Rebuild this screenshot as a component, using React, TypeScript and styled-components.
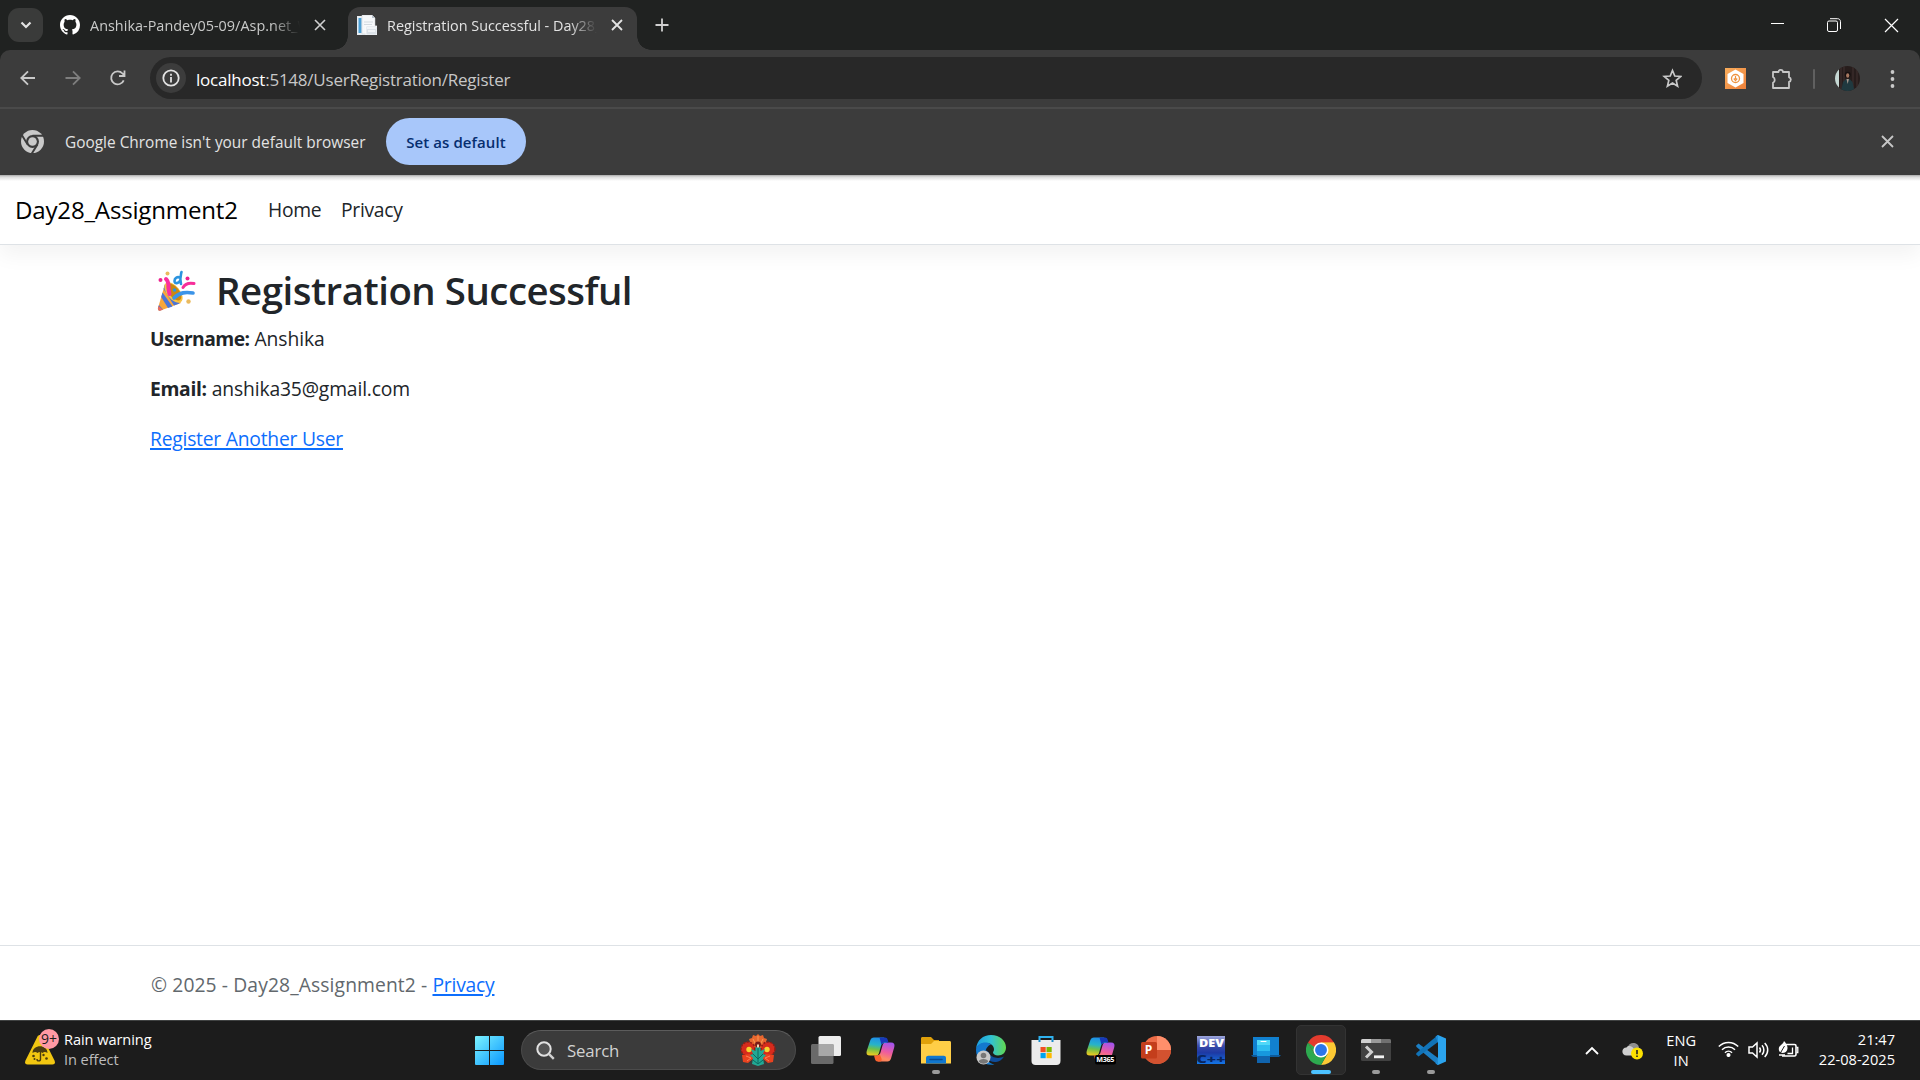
import React from "react";
import styled, { createGlobalStyle } from "styled-components";

const GlobalStyle = createGlobalStyle`
  *, *::before, *::after { box-sizing: border-box; }
  html, body { margin: 0; padding: 0; background: #fff; overflow: hidden; }
  svg { display: block; flex: none; }
`;

const Screen = styled.div`
  width: 1920px;
  height: 1080px;
  display: flex;
  flex-direction: column;
  overflow: hidden;
  background: #fff;
  font-family: "Open Sans", "Noto Sans", "Liberation Sans", sans-serif;
`;

/* Browser chrome */
const TabStrip = styled.div`
  height: 50px;
  flex: none;
  display: flex;
  background: #202221;
  padding: 0 0 0 8px;
`;
const TabSearch = styled.div`
  width: 35px;
  height: 34px;
  margin-top: 8px;
  border-radius: 11px;
  background: #3a3b3a;
  display: flex;
  align-items: center;
  justify-content: center;
`;
const Tab = styled.div<{ $active?: boolean; $width: number }>`
  position: relative;
  width: ${(p) => p.$width}px;
  height: ${(p) => (p.$active ? 43 : 50)}px;
  margin-top: ${(p) => (p.$active ? 7 : 0)}px;
  display: flex;
  align-items: center;
  padding: ${(p) => (p.$active ? "0 13px 7px 9px" : "0 0 0 17px")};
  border-radius: 12px 12px 0 0;
  background: ${(p) => (p.$active ? "#3c3c3c" : "transparent")};
`;
const TabFoot = styled.i<{ $side: "left" | "right" }>`
  position: absolute;
  bottom: 0;
  ${(p) => p.$side}: -14px;
  width: 14px;
  height: 14px;
  background: radial-gradient(circle at ${(p) => (p.$side === "left" ? "0 0" : "100% 0")}, transparent 13.5px, #3c3c3c 14px);
`;
const TabTitle = styled.span<{ $active?: boolean; $spacing: number }>`
  width: 210px;
  margin-left: 10px;
  padding-top: 2px;
  overflow: hidden;
  white-space: nowrap;
  font-size: 14.4px;
  line-height: 20px;
  letter-spacing: ${(p) => p.$spacing}px;
  color: ${(p) => (p.$active ? "#e3e3e3" : "#c9cac9")};
  mask-image: linear-gradient(90deg, #000 182px, transparent 210px);
`;
const TabClose = styled.span`
  margin-left: 14px;
  display: flex;
`;
const NewTab = styled.span`
  display: flex;
  align-items: center;
  margin-left: 18px;
`;
const WindowButtons = styled.div`
  display: flex;
  align-items: center;
  margin-left: auto;
  padding-right: 21px;
  gap: 43px;
`;

const ToolbarBack = styled.div`
  flex: none;
  background: #202221;
`;
const Toolbar = styled.div`
  height: 59px;
  display: flex;
  align-items: center;
  padding: 0 25px 2px 18px;
  background: #3c3c3c;
  border-bottom: 2px solid #4a4a4a;
  border-radius: 10px 10px 0 0;
`;
const NavButtons = styled.div`
  display: flex;
  align-items: center;
  gap: 25px;
  width: 132px;
`;
const AddressBar = styled.div`
  width: 1552px;
  height: 42px;
  margin-top: 1px;
  border-radius: 21px;
  background: #282828;
  display: flex;
  align-items: center;
  padding: 0 20px 0 6px;
`;
const SiteInfo = styled.span`
  width: 30px;
  height: 30px;
  border-radius: 50%;
  background: #3c3c3c;
  display: flex;
  align-items: center;
  justify-content: center;
`;
const Url = styled.span`
  margin: 0 auto 0 10px;
  padding-top: 3px;
  font-size: 17px;
  line-height: 24px;
  letter-spacing: -0.23px;
  color: #c7c7c7;
  b { font-weight: 400; color: #fff; }
`;
const Extensions = styled.div`
  display: flex;
  align-items: center;
  flex: 1;
  justify-content: flex-end;
  padding-top: 2px;
`;
const Orange = styled.span`
  width: 21px;
  height: 21px;
  margin-right: 25px;
  background: linear-gradient(135deg, #f9ad5c, #ee8039);
  display: flex;
`;
const Divider = styled.i`
  width: 2px;
  height: 20px;
  border-radius: 1px;
  background: #606060;
  margin: 0 20px 0 20px;
`;
const Avatar = styled.span`
  width: 25px;
  height: 25px;
  border-radius: 50%;
  overflow: hidden;
  margin-right: 30px;
`;

const InfoBar = styled.div`
  height: 66px;
  flex: none;
  display: flex;
  align-items: center;
  background: #3c3c3c;
  padding: 0 26px 1px 21px;
`;
const InfoText = styled.span`
  margin-left: 21px;
  padding-top: 2px;
  width: 321px;
  font-size: 15.4px;
  line-height: 22px;
  color: #e3e3e3;
  letter-spacing: 0.01px;
  white-space: nowrap;
`;
const DefaultButton = styled.button`
  width: 140px;
  height: 47px;
  border: 0;
  border-radius: 24px;
  background: #a8c7fa;
  color: #062e6f;
  font: 600 15px/22px "Open Sans", sans-serif;
  letter-spacing: 0.08px;
  padding: 1px 0 0;
  margin-right: auto;
  white-space: nowrap;
`;

/* Web page */
const Page = styled.div`
  flex: 1;
  display: flex;
  flex-direction: column;
  background: #fff;
  color: #212529;
  font-size: 19.3px;
  line-height: 30px;
`;
const NavBar = styled.header`
  height: 70px;
  display: flex;
  align-items: center;
  padding: 1px 0 0 15px;
  border-bottom: 1px solid #dee2e6;
  background: linear-gradient(#a8a8a8, #dcdcdc 2px, #fff 6px);
  box-shadow: 0 10px 20px rgba(0, 0, 0, 0.05);
`;
const Brand = styled.a`
  width: 253px;
  font-size: 24.1px;
  letter-spacing: -0.2px;
  color: #000;
  white-space: nowrap;
`;
const NavLink = styled.a<{ $width: number }>`
  width: ${(p) => p.$width}px;
  color: #212529;
  letter-spacing: -0.3px;
  white-space: nowrap;
`;
const Main = styled.main`
  flex: 1;
  padding: 21px 150px 0;
`;
const Heading = styled.h2`
  display: flex;
  align-items: center;
  height: 48px;
  margin: 0 0 10px;
  font-size: 38.4px;
  line-height: 48px;
  font-weight: 600;
  white-space: nowrap;
  svg { margin: 2px 19px 0 7px; }
`;
const Title = styled.span`
  letter-spacing: -0.48px;
`;
const Field = styled.p`
  margin: 0 0 20px;
`;
const Label = styled.strong<{ $spacing: number }>`
  font-weight: 700;
  letter-spacing: ${(p) => p.$spacing}px;
`;
const Value = styled.span<{ $spacing: number }>`
  letter-spacing: ${(p) => p.$spacing}px;
`;
const Link = styled.a`
  color: #0d6efd;
  letter-spacing: -0.23px;
  text-decoration: underline;
  text-decoration-thickness: 2px;
  text-underline-offset: 2px;
`;
const Footer = styled.footer`
  height: 75px;
  border-top: 1px solid #dee2e6;
  padding: 24px 151px 0;
  color: #62686d;
  white-space: nowrap;
`;

/* Taskbar */
const TaskBar = styled.div`
  height: 60px;
  flex: none;
  display: flex;
  align-items: center;
  background: #1c1c1c;
  border-top: 1px solid #404242;
  color: #fff;
  font-size: 14.6px;
  line-height: 20px;
`;
const Weather = styled.div`
  display: flex;
  align-items: center;
  width: 475px;
  padding: 0 0 3px 25px;
`;
const WeatherIcon = styled.div`
  width: 39px;
  height: 40px;
`;
const Lines = styled.div<{ $align: string; $spacing?: number }>`
  display: flex;
  flex-direction: column;
  align-items: ${(p) => p.$align};
  letter-spacing: ${(p) => p.$spacing ?? 0}px;
  padding-bottom: 1px;
  white-space: nowrap;
`;
const Muted = styled.span`
  color: #bdbdbd;
`;
const SearchBox = styled.div`
  width: 275px;
  height: 40px;
  margin: 0 2px 1px 17px;
  border: 1px solid #4b4b4b;
  border-top-color: #5c5c5c;
  border-radius: 20px;
  background: #3b3b3b;
  display: flex;
  align-items: center;
  padding: 0 19px 0 14px;
`;
const SearchText = styled.span`
  margin: 1px auto 0 12px;
  font-size: 16.8px;
  line-height: 22px;
  letter-spacing: -0.15px;
  color: #d2d2d2;
`;
const AppCell = styled.div<{ $active?: boolean }>`
  width: 50px;
  height: 50px;
  margin: 0 2.5px 1px;
  border-radius: 5px;
  border: 1px solid ${(p) => (p.$active ? "#333" : "transparent")};
  background: ${(p) => (p.$active ? "#292929" : "transparent")};
  display: grid;
  grid-template-rows: 1fr 4px;
  justify-items: center;
  padding-top: 9px;
`;
const Indicator = styled.i<{ $kind?: "open" | "active" }>`
  height: 4px;
  border-radius: 2px;
  width: ${(p) => (p.$kind === "active" ? 20 : 8)}px;
  background: ${(p) => (p.$kind === "active" ? "#4cc2ff" : p.$kind === "open" ? "#9a9a9a" : "transparent")};
`;
const Tray = styled.div`
  margin-left: auto;
  padding: 0 24px 1px 0;
  display: flex;
  align-items: center;
`;
const TrayIcons = styled.div`
  display: flex;
  gap: 9px;
  margin: 0 0 0 22px;
`;
const OneDrive = styled.div`
  margin: 2px 22px 0 23px;
`;
const Clock = styled.div`
  width: 97px;
  padding: 0 1px 2px 0;
`;

const Cross = ({ size, color, w = 2 }: { size: number; color: string; w?: number }) => (
  <svg width={size} height={size} viewBox={`0 0 ${size} ${size}`}>
    <path d={`M1 1L${size - 1} ${size - 1}M${size - 1} 1L1 ${size - 1}`} stroke={color} strokeWidth={w} />
  </svg>
);

const GitHub = () => (
  <svg width="20" height="20" viewBox="0 0 16 16" fill="#fff">
    <path d="M8 0C3.58 0 0 3.58 0 8c0 3.54 2.29 6.53 5.47 7.59.4.07.55-.17.55-.38 0-.19-.01-.82-.01-1.49-2.01.37-2.53-.49-2.69-.94-.09-.23-.48-.94-.82-1.13-.28-.15-.68-.52-.01-.53.63-.01 1.08.58 1.23.82.72 1.21 1.87.87 2.33.66.07-.52.28-.87.51-1.07-1.78-.2-3.64-.89-3.64-3.95 0-.87.31-1.59.82-2.15-.08-.2-.36-1.02.08-2.12 0 0 .67-.21 2.2.82.64-.18 1.32-.27 2-.27s1.36.09 2 .27c1.53-1.04 2.2-.82 2.2-.82.44 1.1.16 1.92.08 2.12.51.56.82 1.27.82 2.15 0 3.07-1.87 3.75-3.65 3.95.29.25.54.73.54 1.48 0 1.07-.01 1.93-.01 2.2 0 .21.15.46.55.38A8.01 8.01 0 0016 8c0-4.42-3.58-8-8-8z" />
  </svg>
);

const Favicon = () => (
  <svg width="20" height="20" viewBox="0 0 20 20">
    <path d="M0 1h12v19H0z" fill="#e8eef3" />
    <path d="M1.500 3h3v15h-3z" fill="#4b9fd5" />
    <path d="M5 0h10l3 3v16H5z" fill="#f6f8fa" stroke="#c8ccd0" strokeWidth=".5" />
    <path d="M15 0v3h3z" fill="#b9c3cc" />
    <path d="M7 7h9M7 9.500h8" stroke="#d3dae0" />
    <path d="M9 11h11v9H9z" fill="#dce2e8" stroke="#fff" strokeWidth=".7" />
    <path d="M10 13h9M11 16h7" stroke="#f8fafb" strokeWidth="1.300" />
  </svg>
);

const Chrome = ({ size, mono }: { size: number; mono?: boolean }) =>
  mono ? (
    <svg width={size} height={size} viewBox="0 0 48 48">
      <circle cx="24" cy="24" r="24" fill="#c9c9c9" />
      <path d="M24 12H46M34.400 30L22 50M13.600 30L2 11" stroke="#3c3c3c" strokeWidth="4" />
      <circle cx="24" cy="24" r="13.500" fill="#3c3c3c" />
      <circle cx="24" cy="24" r="9" fill="#c9c9c9" />
    </svg>
  ) : (
    <svg width={size} height={size} viewBox="0 0 48 48">
      <path d="M24 24L3.200 12A24 24 0 0 1 44.800 12z" fill="#e33b2e" />
      <path d="M44.800 12A24 24 0 0 1 24 48L34.400 30 24 12z" fill="#fcc934" />
      <path d="M3.200 12A24 24 0 0 0 24 48L34.400 30 24 28 13.600 30z" fill="#2da94f" />
      <path d="M3.200 12H44.800L24 24 13.600 30z" fill="#e33b2e" />
      <path d="M3.200 12L13.600 30 20 24z" fill="#2da94f" />
      <path d="M24 12H44.800L34.400 30z" fill="#fcc934" />
      <circle cx="24" cy="24" r="12" fill="#fff" />
      <circle cx="24" cy="24" r="9.500" fill="#2b76ea" />
    </svg>
  );

const Party = () => (
  <svg width="40" height="42" viewBox="0 0 40 42">
    <path d="M8 14L1 38c-.5 2 .8 3 2.500 2.500L24 33z" fill="#f9a63a" />
    <path d="M6.500 19L17 35.500l5.500-2L7.800 14.500zM4.200 27l6.800 11 4.500-1.600L5.500 22.500zM2 35l4 4.500-3 1c-1.500.2-2.300-.8-2-2.500z" fill="#4a75d8" />
    <path d="M1.600 36L6 39.700l-2.500.9c-1.800.3-2.800-.6-2.500-2.300z" fill="#ed6b5c" />
    <ellipse cx="16.500" cy="22.500" rx="6.500" ry="12" transform="rotate(-39 16.500 22.500)" fill="#f7c243" />
    <ellipse cx="17" cy="22" rx="5" ry="10" transform="rotate(-39 17 22)" fill="#c98712" />
    <path d="M9 9c4.500 4 1 9 3.500 15" fill="none" stroke="#fa2e9e" strokeWidth="4" strokeLinecap="round" />
    <path d="M17 28c6-6 12-6 19-5" fill="none" stroke="#3b94e8" strokeWidth="3.600" strokeLinecap="round" />
    <path d="M26 17.500c2-3.500 6-5 11-4" fill="none" stroke="#f72e9a" strokeWidth="3" strokeLinecap="round" />
    <path d="M24.500 2c-1 4-2 6-.5 12M23.500 8c-3-2-6 0-6 3s4 3 6-1" fill="none" stroke="#2c94df" strokeWidth="2.600" strokeLinecap="round" />
    <g fill="#ed218f"><circle cx="3.500" cy="10" r="2" /><circle cx="30.500" cy="8.500" r="2" /></g>
    <g fill="#eaba5e"><circle cx="10.500" cy="3.500" r="2" /><circle cx="31.500" cy="31.500" r="2.200" /></g>
    <circle cx="17.500" cy="20" r="1.800" fill="#2c94df" />
  </svg>
);

const Peacock = () => (
  <svg width="36" height="32" viewBox="0 0 36 32">
    <path d="M18 0l2 2 3-1 1 3 3 1-1 3 1 3-4 3H13L9 11l1-3-1-3 3-1 1-3 3 1z" fill="#e8672f" />
    <path d="M18 2v10M13 5l4 8M23 5l-4 8" stroke="#f79a55" />
    <circle cx="8" cy="15" r="7" fill="#d62b1c" stroke="#8e1d16" strokeWidth="1.500" strokeDasharray="2 1.500" />
    <circle cx="28" cy="15" r="7" fill="#d62b1c" stroke="#8e1d16" strokeWidth="1.500" strokeDasharray="2 1.500" />
    <path d="M2 21l8-1 4 4-6 5-5-1zM34 21l-8-1-4 4 6 5 5-1z" fill="#e9421f" />
    <path d="M6 22l5 2-4 3M30 22l-5 2 4 3" stroke="#ff8055" fill="none" />
    <circle cx="9" cy="15.500" r="2.700" fill="#f8d32f" />
    <circle cx="27" cy="15.500" r="2.700" fill="#f8d32f" />
    <path d="M18 12c2 0 3 2 2.500 5l4.500-2-2 5 3 1-3 3 1 6-6 2-6-2 1-6-3-3 3-1-2-5 4.500 2c-.5-3 .5-5 2.500-5z" fill="#22a995" />
    <path d="M18 14v15M13 20l5 5 5-5M13 26l5 4 5-4" stroke="#0c685f" fill="none" />
    <circle cx="18" cy="10.500" r="3" fill="#7b1b17" />
    <path d="M17 10.500h2v3h-2z" fill="#f5d8b7" />
  </svg>
);

const CopilotShape = () => (
  <>
    <path d="M21.500 26.500H12L8.500 20.500h2.500c2 0 3-1 3.500-3l2-7C17 8.500 18 7.500 20 7.500h5c3 0 4 1.500 3.300 4.500L25 23.500c-.7 2-1.700 3-3.500 3z" fill="url(#cpB)" />
    <path d="M8 2.500h10l3 5.500h-2.500c-2 0-3 1-3.500 3l-2 7c-.5 1.700-1.500 2.500-3.200 2.500H4C1 20.500 0 19 .7 16L4.200 5.500C4.900 3.500 6 2.500 8 2.500z" fill="url(#cpA)" />
    <path d="M13.500 2.500H19c1.500 0 2.300.8 2.700 2.200l.8 2.800H20c-2.500 0-3.800.5-4.500 2.500z" fill="#1838b8" />
    <path d="M8 20.500h3c1 0 2-.5 2.700-1.500l1.800 4.500c.4 1.500 0 3-1.500 3h-2.500c-1.200 0-2-.8-2.400-2z" fill="#f9622f" />
  </>
);
const Copilot = ({ m365 }: { m365?: boolean }) => (
  <svg width="30" height="30" viewBox="0 0 30 30">
    <defs>
      <linearGradient id="cpA" x1=".5" y1="0" x2=".35" y2="1">
        <stop offset="0" stopColor="#1e8ee8" /><stop offset=".4" stopColor="#27b3c9" /><stop offset=".65" stopColor="#6dc04a" /><stop offset="1" stopColor="#f0cb1f" />
      </linearGradient>
      <linearGradient id="cpB" x1=".7" y1="0" x2=".4" y2="1">
        <stop offset="0" stopColor="#a254ee" /><stop offset=".5" stopColor="#ee5c9f" /><stop offset=".85" stopColor="#fd8c62" /><stop offset="1" stopColor="#fb7a55" />
      </linearGradient>
    </defs>
    <CopilotShape />
    {m365 && (
      <>
        <rect x="9" y="20" width="21" height="9.500" rx="2" fill="#000" />
        <text x="10.300" y="27.300" fontSize="7.200" fontWeight="700" fill="#fff" fontFamily="Open Sans" textLength="18">M365</text>
      </>
    )}
  </svg>
);

const TaskView = () => (
  <svg width="30" height="30" viewBox="0 0 30 30">
    <rect x="7.500" y="1" width="22.500" height="20" rx="1.500" fill="#ededed" />
    <rect x="0" y="9" width="22.500" height="20" rx="1.500" fill="#6a6a6a" />
    <path d="M7.500 9h15v12h-15z" fill="#a8a8a8" />
  </svg>
);
const Folder = () => (
  <svg width="30" height="30" viewBox="0 0 30 30">
    <path d="M0 3.500C0 2.500.7 2 1.500 2H10l3 3h5v8H0z" fill="#e0a10b" />
    <path d="M0 9h10l3-3h15.500c1 0 1.500.6 1.500 1.500v21H0z" fill="#ffce47" />
    <path d="M5 28.500V23c0-1.500 1-2.300 2.300-2.300h15.400c1.300 0 2.300.8 2.300 2.300v5.500z" fill="#1077cf" />
    <path d="M9 24.500h12" stroke="#084b91" strokeWidth="1.500" strokeLinecap="round" />
  </svg>
);
const Edge = () => (
  <svg width="30" height="30" viewBox="0 0 30 30">
    <defs><linearGradient id="edgeTop"><stop offset="0" stopColor="#1b9de2" /><stop offset=".5" stopColor="#31c2d4" /><stop offset="1" stopColor="#62d84e" /></linearGradient></defs>
    <path d="M0 14C1 5 7 0 15 0c9 0 15 6 15 12.500 0 5-3.500 8-8 8-3 0-5-1.500-5-3 0-1 1-1.200 1-3.300C18 11 15 8 10.500 8 5 8 1 11 0 14z" fill="url(#edgeTop)" />
    <path d="M0 15c0-5 5-7.500 9.500-7.500 2 0 4 .5 5.500 2-3 1-5.500 4-5.500 8.500 0 6 4 11 9 11.500C9 31.500 0 25 0 15z" fill="#1379cf" />
    <path d="M10.500 15c-2 7 3.500 13 9.500 12 3 0 6-2.500 8-5.500-6 3-13 1-15-3.500z" fill="#0f4d9b" />
    <circle cx="7.500" cy="22.500" r="7" fill="#c9c9c9" />
    <circle cx="7.500" cy="20.500" r="2.800" fill="#777" />
    <path d="M2.800 26.500c0-3.500 9.400-3.500 9.400 0-2.500 3-7 3-9.400 0z" fill="#777" />
  </svg>
);
const Store = () => (
  <svg width="30" height="30" viewBox="0 0 30 30">
    <path d="M8.500 7V2h13v5" fill="none" stroke="#2fb2ef" strokeWidth="2" />
    <path d="M.5 5h29v21c0 2.500-1.500 4-4 4h-21c-2.500 0-4-1.500-4-4z" fill="#ececec" />
    <path d="M8.500 7V5M21.500 7V5" stroke="#178bcb" strokeWidth="2" />
    <path d="M9.500 12h5.200v5.200H9.500z" fill="#f25022" /><path d="M15.500 12h5.200v5.200h-5.200z" fill="#7fba00" />
    <path d="M9.500 18h5.200v5.200H9.500z" fill="#00a4ef" /><path d="M15.500 18h5.200v5.200h-5.200z" fill="#ffb900" />
  </svg>
);
const PowerPoint = () => (
  <svg width="30" height="30" viewBox="0 0 30 30">
    <circle cx="16" cy="15" r="14" fill="#ed6c47" />
    <path d="M16 1a14 14 0 0 1 14 14H16z" fill="#ff8f6b" />
    <path d="M30 15a14 14 0 0 1-28 0z" fill="#d35230" />
    <rect x="0" y="7" width="16" height="16.500" rx="1.500" fill="#c43e1c" />
    <text x="3.800" y="19" fontSize="12" fontWeight="700" fill="#fff" fontFamily="Open Sans">P</text>
  </svg>
);
const DevCpp = () => (
  <svg width="30" height="30" viewBox="0 0 30 30">
    <defs><linearGradient id="devBg" x2="0" y2="1"><stop offset="0" stopColor="#9da6dc" /><stop offset=".35" stopColor="#3b4ba8" /><stop offset=".6" stopColor="#1d39a4" /><stop offset="1" stopColor="#1476e6" /></linearGradient></defs>
    <path d="M1 1h28v28H1z" fill="url(#devBg)" />
    <text x="3" y="12.300" fontSize="11" fontWeight="800" fill="#fff" fontFamily="Open Sans" textLength="25" lengthAdjust="spacingAndGlyphs">DEV</text>
    <text x="0.500" y="27.600" fontSize="11" fontWeight="800" fill="#08245e" fontFamily="Open Sans" textLength="29" lengthAdjust="spacingAndGlyphs">C++</text>
  </svg>
);
const PhoneLink = () => (
  <svg width="30" height="30" viewBox="0 0 30 30">
    <path d="M2 2h26v18H2z" fill="#1180cf" /><path d="M0 20h30l-2 2H2z" fill="#0d5a9b" />
    <path d="M6 5h13v10H6z" fill="#50d9f8" /><path d="M6 10h13v6H6z" fill="#2dbdf0" /><path d="M6 16h13v5H6z" fill="#1798de" /><path d="M6 21h13v7H6z" fill="#1064ae" />
    <path d="M10 6.500h5" stroke="#fff" strokeLinecap="round" />
  </svg>
);
const Terminal = () => (
  <svg width="30" height="30" viewBox="0 0 30 30">
    <rect x="0" y="4" width="30" height="22" rx="1.500" fill="#414141" />
    <path d="M0 8V5.500Q0 4 1.500 4H10v4z" fill="#d0d0d0" /><path d="M10 4h10v4H10z" fill="#9a9a9a" /><path d="M20 4h8.500Q30 4 30 5.500V8H20z" fill="#707070" />
    <path d="M5 11.500l5.500 5.500L5 22.500" fill="none" stroke="#cfcfcf" strokeWidth="3" /><path d="M13 21.800h10" stroke="#f2f2f2" strokeWidth="2.800" />
  </svg>
);
const VsCode = () => (
  <svg width="30" height="30" viewBox="0 0 30 30">
    <path d="M0 10.800l2.500-2.300L22 23v7L.5 12z" fill="#1c7fc4" />
    <path d="M0 19.200l2.500 2.300L22 7V0L.5 18z" fill="#1173b7" />
    <path d="M22 0l8 3.500v23L22 30l-1.500-1 1.500-6V7l-1.500-6z" fill="#2ba4ee" />
    <path d="M22 0l-2.500 1.500L22 8zM22 30l-2.500-1.500L22 22z" fill="#1e8ad4" />
  </svg>
);

const apps: { icon: React.ReactNode; kind?: "open" | "active" }[] = [
  { icon: <TaskView /> },
  { icon: <Copilot /> },
  { icon: <Folder />, kind: "open" },
  { icon: <Edge /> },
  { icon: <Store /> },
  { icon: <Copilot m365 /> },
  { icon: <PowerPoint /> },
  { icon: <DevCpp /> },
  { icon: <PhoneLink /> },
  { icon: <Chrome size={30} />, kind: "active" },
  { icon: <Terminal />, kind: "open" },
  { icon: <VsCode />, kind: "open" },
];

export default function App() {
  return (
    <Screen>
      <GlobalStyle />
      <TabStrip>
        <TabSearch>
          <svg width="12" height="8" viewBox="0 0 12 8"><path d="M1.500 1.500L6 6l4.500-4.500" fill="none" stroke="#e3e3e3" strokeWidth="2.200" /></svg>
        </TabSearch>
        <Tab $width={305}>
          <GitHub />
          <TabTitle $spacing={0.03}>Anshika-Pandey05-09/Asp.net_W</TabTitle>
          <TabClose><Cross size={12} color="#d0d0d0" w={1.6} /></TabClose>
        </Tab>
        <Tab $active $width={289}>
          <TabFoot $side="left" />
          <Favicon />
          <TabTitle $active $spacing={0}>Registration Successful - Day28_</TabTitle>
          <TabClose><Cross size={12} color="#e3e3e3" w={1.8} /></TabClose>
          <TabFoot $side="right" />
        </Tab>
        <NewTab>
          <svg width="14" height="14" viewBox="0 0 14 14"><path d="M7 .5v13M.5 7h13" stroke="#d0d0d0" strokeWidth="1.800" /></svg>
        </NewTab>
        <WindowButtons>
          <svg width="14" height="14" viewBox="0 0 14 14"><path d="M1 5.500h13" stroke="#fff" /></svg>
          <svg width="14" height="14" viewBox="0 0 14 14" fill="none" stroke="#fff"><rect x=".5" y="3" width="10" height="10.500" rx="1.500" /><path d="M3 .7h7.500c1.800 0 3 1.200 3 3V11" /></svg>
          <Cross size={15} color="#fff" w={1.2} />
        </WindowButtons>
      </TabStrip>

      <ToolbarBack>
        <Toolbar>
          <NavButtons>
            <svg width="20" height="20" viewBox="0 0 20 20" fill="none" stroke="#c9c9c9" strokeWidth="1.800"><path d="M17 10H3.500M10 3.300L3.300 10l6.700 6.700" /></svg>
            <svg width="20" height="20" viewBox="0 0 20 20" fill="none" stroke="#7e7e7e" strokeWidth="1.800"><path d="M2.500 10h14M10 3.300l6.700 6.700-6.700 6.700" /></svg>
            <svg width="20" height="20" viewBox="0 0 20 20" fill="none" stroke="#c9c9c9" strokeWidth="1.800"><path d="M15.700 12.300A6.500 6.500 0 1 1 14.500 5.500L16.500 7.500M16.500 2.500v5.500h-5.500" /></svg>
          </NavButtons>
          <AddressBar>
            <SiteInfo>
              <svg width="18" height="18" viewBox="0 0 18 18"><circle cx="9" cy="9" r="7.700" fill="none" stroke="#e3e3e3" strokeWidth="1.800" /><path d="M9 8v5.500M9 4.700v2" stroke="#e3e3e3" strokeWidth="1.800" /></svg>
            </SiteInfo>
            <Url><b>localhost</b>:5148/UserRegistration/Register</Url>
            <svg width="20" height="20" viewBox="0 0 20 20"><path d="M10.500 2.500l2.300 5.500 6 .5-4.600 3.900 1.400 5.800-5.100-3.100-5.100 3.100 1.400-5.800L2.200 8.500l6-.5z" fill="none" stroke="#c9c9c9" strokeWidth="1.700" /></svg>
          </AddressBar>
          <Extensions>
            <Orange>
              <svg width="21" height="21" viewBox="0 0 21 21"><path d="M10.500 1.500l8 4.500v9l-8 4.500-8-4.500V6z" fill="#fff" /><circle cx="10.500" cy="10.500" r="4" fill="none" stroke="#ee9340" strokeWidth="1.300" /><path d="M10.500 8v3M8.800 10.500l1.700 2 1.700-2" stroke="#ee9340" fill="none" strokeWidth="1.200" /></svg>
            </Orange>
            <svg width="22" height="22" viewBox="0 0 22 22"><path d="M2 4h5.500a2.200 2.200 0 0 1 4.400 0H18v5.300a2.300 2.300 0 0 1 0 4.500v6.200H2v-5.200a3.300 3.300 0 0 0 0-5.800z" fill="none" stroke="#c7c7c7" strokeWidth="1.800" strokeLinejoin="round" /></svg>
            <Divider />
            <Avatar>
              <svg width="25" height="25" viewBox="0 0 25 25">
                <path d="M0 0h25v25H0z" fill="#271d1c" /><path d="M0 0h4v25H0z" fill="#c5d8d4" /><path d="M6 0v25M9 0v25M18 0v25M22 0v25" stroke="#423231" />
                <path d="M6 25l2-9 3-3h3.500l3 3 2 9z" fill="#20393f" /><path d="M11.500 13l1.200 5 1.200-5z" fill="#a99b90" /><circle cx="12.700" cy="8.800" r="3" fill="#171111" /><ellipse cx="12.700" cy="9.500" rx="1.600" ry="2.200" fill="#a87860" />
              </svg>
            </Avatar>
            <svg width="5" height="20" viewBox="0 0 5 20" fill="#c9c9c9"><circle cx="2.500" cy="3" r="1.900" /><circle cx="2.500" cy="10" r="1.900" /><circle cx="2.500" cy="17" r="1.900" /></svg>
          </Extensions>
        </Toolbar>
      </ToolbarBack>

      <InfoBar>
        <Chrome size={23} mono />
        <InfoText>Google Chrome isn't your default browser</InfoText>
        <DefaultButton>Set as default</DefaultButton>
        <Cross size={13} color="#c7c7c7" w={1.8} />
      </InfoBar>

      <Page>
        <NavBar>
          <Brand>Day28_Assignment2</Brand>
          <NavLink $width={73}>Home</NavLink>
          <NavLink $width={80}>Privacy</NavLink>
        </NavBar>
        <Main>
          <Heading><Party /><Title>Registration Successful</Title></Heading>
          <Field><Label $spacing={-0.55}>Username:</Label> <Value $spacing={-0.1}>Anshika</Value></Field>
          <Field><Label $spacing={-0.32}>Email:</Label> <Value $spacing={-0.15}>anshika35@gmail.com</Value></Field>
          <Link>Register Another User</Link>
        </Main>
        <Footer><Value $spacing={0.1}>© 2025 - Day28_Assignment2 - </Value><Link>Privacy</Link></Footer>
      </Page>

      <TaskBar>
        <Weather>
          <WeatherIcon>
            <svg width="36" height="38" viewBox="0 0 36 38">
              <path d="M12.500 7.500c1-2 4-2 5 0l12 24c1 2.500 0 4-2 4h-25c-2 0-3-1.500-2-4z" fill="#f2c711" />
              <path d="M7.500 24c0-9 15-9 15 0-2-1.500-3.500-1.500-5 0-1.500-1.500-3.500-1.500-5 0-1.500-1.500-3-1.500-5 0z" fill="#4a3c10" /><path d="M15.500 22v8c0 2.500-3.500 2.500-3.500 0" fill="none" stroke="#4a3c10" strokeWidth="1.400" />
              <g fill="#4a3c10"><circle cx="8.500" cy="27" r="1.300" /><circle cx="18.500" cy="26" r="1.200" /><circle cx="21.500" cy="29.500" r="1.300" /><circle cx="9.500" cy="30" r="1" /></g>
              <circle cx="24" cy="10" r="10" fill="#ff99a4" />
              <text x="24" y="14.800" fontSize="14" textAnchor="middle" fill="#1c1c1c" fontFamily="Open Sans">9+</text>
            </svg>
          </WeatherIcon>
          <Lines $align="flex-start" $spacing={-0.07}><span>Rain warning</span><Muted>In effect</Muted></Lines>
        </Weather>
        <svg width="29" height="29" viewBox="0 0 29 29">
          <defs><linearGradient id="win" gradientUnits="userSpaceOnUse" x1="0" y1="0" x2="29" y2="29"><stop offset="0" stopColor="#7cf3ff" /><stop offset="1" stopColor="#0997ff" /></linearGradient></defs>
          <path d="M1 0h13v14H0V1q0-1 1-1zM15 0h13q1 0 1 1v13H15zM0 15h14v14H1q-1 0-1-1zM15 15h14v13q0 1-1 1H15z" fill="url(#win)" />
        </svg>
        <SearchBox>
          <svg width="19" height="19" viewBox="0 0 19 19"><circle cx="8" cy="8" r="6.700" fill="#555" stroke="#e2e2e2" strokeWidth="2" /><path d="M12.800 12.800l5 5" stroke="#d0d0d0" strokeWidth="2.400" /></svg>
          <SearchText>Search</SearchText>
          <Peacock />
        </SearchBox>
        {apps.map((a, i) => (
          <AppCell key={i} $active={a.kind === "active"}>{a.icon}<Indicator $kind={a.kind} /></AppCell>
        ))}
        <Tray>
          <svg width="14" height="9" viewBox="0 0 14 9"><path d="M1 8l6-6 6 6" fill="none" stroke="#fff" strokeWidth="1.800" /></svg>
          <OneDrive>
            <svg width="22" height="18" viewBox="0 0 22 18">
              <path d="M6 5c1-6 11-5 11 1 3 0 4 6 0 7H5z" fill="#8f8f8f" /><path d="M4.500 13.500c-5.500 0-5.500-8 0-8 2-3 6-1 7 1 4 1 4 7 0 7z" fill="#cfcfcf" />
              <circle cx="15" cy="11.500" r="6" fill="#fce100" /><path d="M15 8v4.200M15 13.500v1.500" stroke="#222" strokeWidth="1.600" />
            </svg>
          </OneDrive>
          <Lines $align="center"><span>ENG</span><span>IN</span></Lines>
          <TrayIcons>
            <svg width="21" height="16" viewBox="0 0 21 16" fill="none" stroke="#fff" strokeWidth="1.500"><path d="M.8 5.500a13.700 13.700 0 0 1 19.400 0M4 8.700a9.200 9.200 0 0 1 13 0M7 11.700a5 5 0 0 1 7 0" /><circle cx="10.500" cy="14" r="1.300" fill="#fff" /></svg>
            <svg width="21" height="18" viewBox="0 0 21 18" fill="none" stroke="#fff" strokeWidth="1.500"><path d="M1 6h3.500L9 2v14l-4.500-4H1zM11.500 6.500c1.200 1.500 1.200 3.500 0 5M14 4.200c2.500 2.500 2.500 7 0 9.600M16.700 2c4 4 4 10 0 14" /></svg>
            <svg width="21" height="18" viewBox="0 0 21 18"><path d="M8 3.500h8.500c1 0 1.500.5 1.500 1.500v8c0 1.500-.5 2-1.500 2H4" fill="none" stroke="#fff" strokeWidth="1.600" /><path d="M18.500 6.500h1.300v5h-1.300M14.500 6.500v6h-5" fill="none" stroke="#fff" strokeWidth="1.300" /><path d="M6 0c4 4 5 9 1 11.500-4 1.500-7-1-6-5 .5-2 4-3 5-6.500z" fill="#fff" /><path d="M6.500 5L1.500 13.500" stroke="#1c1c1c" /><path d="M1 14h6" stroke="#fff" strokeWidth="1.500" /></svg>
          </TrayIcons>
          <Clock><Lines $align="flex-end"><span>21:47</span><span>22-08-2025</span></Lines></Clock>
        </Tray>
      </TaskBar>
    </Screen>
  );
}
